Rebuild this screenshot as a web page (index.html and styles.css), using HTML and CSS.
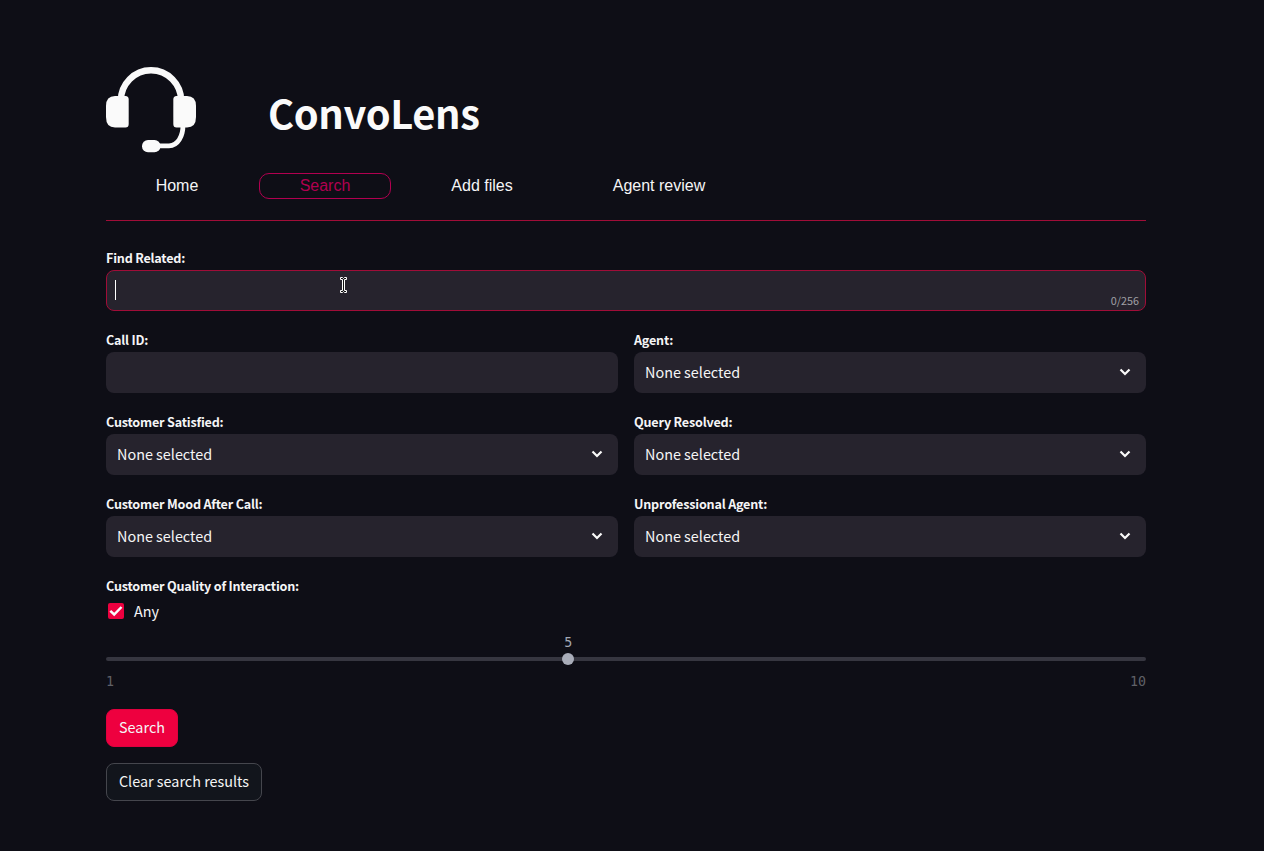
FILE: index.html
```html
<!DOCTYPE html>
<html lang="en">
<head>
<meta charset="utf-8">
<title>ConvoLens</title>
<link rel="stylesheet" href="styles.css">
</head>
<body>
<main class="page">
  <header class="brand">
    <svg class="logo" viewBox="0 0 90 86" width="90" height="86">
      <path d="M14.800 34A30.200 30.700 0 0 1 75.200 34" fill="none" stroke="#fafafa" stroke-width="6.400"/>
      <path d="M77 58C77 69 72 78.800 63 78.800H51" fill="none" stroke="#fafafa" stroke-width="4.800"/>
      <path d="M9 29H19.500Q22.700 29 22.700 32.500V57Q22.700 60.500 19.500 60.500H9Q0 60.500 0 50V39Q0 29 9 29Z" fill="#fafafa"/>
      <path d="M81 29H70.500Q67.300 29 67.300 32.500V57Q67.300 60.500 70.500 60.500H81Q90 60.500 90 50V39Q90 29 81 29Z" fill="#fafafa"/>
      <rect x="36" y="73" width="18.500" height="12.200" rx="6" fill="#fafafa"/>
    </svg>
    <h1 class="title">ConvoLens</h1>
  </header>
  <nav class="nav">
    <a class="nav-item nav-home">Home</a>
    <a class="nav-item nav-search active">Search</a>
    <a class="nav-item nav-add">Add files</a>
    <a class="nav-item nav-review">Agent review</a>
  </nav>
  <form class="form">
    <div class="field wide">
      <label class="label">Find Related:</label>
      <div class="control focused"><span class="caret"></span><span class="count">0/256</span>
        <svg class="pointer" viewBox="0 0 9 18" width="9" height="18"><path d="M1.500 1.500H3.500L4.500 2.500L5.500 1.500H7.500V3.500H5.500V14.500H7.500V16.500H5.500L4.500 15.500L3.500 16.500H1.500V14.500H3.500V3.500H1.500Z" fill="#111" stroke="#fff"/></svg>
      </div>
    </div>
    <div class="field"><label class="label">Call ID:</label><div class="control"></div></div>
    <div class="field"><label class="label">Agent:</label><div class="control">None selected<svg class="chevron" viewBox="0 0 12 8"><path d="M1.500 1.500L6 6L10.500 1.500"/></svg></div></div>
    <div class="field"><label class="label">Customer Satisfied:</label><div class="control">None selected<svg class="chevron" viewBox="0 0 12 8"><path d="M1.500 1.500L6 6L10.500 1.500"/></svg></div></div>
    <div class="field"><label class="label">Query Resolved:</label><div class="control">None selected<svg class="chevron" viewBox="0 0 12 8"><path d="M1.500 1.500L6 6L10.500 1.500"/></svg></div></div>
    <div class="field"><label class="label">Customer Mood After Call:</label><div class="control">None selected<svg class="chevron" viewBox="0 0 12 8"><path d="M1.500 1.500L6 6L10.500 1.500"/></svg></div></div>
    <div class="field"><label class="label">Unprofessional Agent:</label><div class="control">None selected<svg class="chevron" viewBox="0 0 12 8"><path d="M1.500 1.500L6 6L10.500 1.500"/></svg></div></div>
  </form>
  <section class="quality">
    <div class="label">Customer Quality of Interaction:</div>
    <div class="check"><span class="box"><svg viewBox="0 0 16 16" width="16" height="16"><path d="M2.300 7.800L6.200 11.500L13.500 4" fill="none" stroke="#fafafa" stroke-width="2.500"/></svg></span><span class="check-text">Any</span></div>
    <div class="slider">
      <div class="track"><div class="thumb" style="left:44.440%"><span class="value">5</span></div></div>
      <div class="range"><span>1</span><span>10</span></div>
    </div>
  </section>
  <div class="actions">
    <button class="button primary">Search</button>
    <button class="button secondary">Clear search results</button>
  </div>
</main>
</body>
</html>
```
FILE: styles.css
```css
* { box-sizing: border-box; }
body {
  margin: 0;
  background: #0e0e16;
  color: #f5f5f6;
  font-family: "Noto Sans CJK SC", "Open Sans", sans-serif;
  font-size: 14.400px;
}
.page { width: 1040px; margin-left: 106px; padding-top: 67px; }
.brand { display: flex; height: 106px; }
.logo { flex: none; }
.title {
  margin: 16px 0 0 72px;
  color: #fafafa;
  font-size: 39.800px;
  line-height: 58px;
  height: 58px;
  font-weight: 700;
  letter-spacing: -0.350px;
}
.nav {
  display: flex;
  height: 48px;
  border-bottom: 1px solid #a00d38;
  font: 16px/24px "Liberation Sans", Arial, sans-serif;
}
.nav-item {
  height: 26px;
  border: 1px solid transparent;
  border-radius: 10px;
  text-align: center;
}
.nav-home { width: 142px; }
.nav-search { width: 132px; margin-left: 11px; }
.nav-add { width: 140px; margin-left: 21px; }
.nav-review { width: 200px; margin-left: 7px; }
.active { color: #b20050; border-color: #b20050; }
.form {
  display: grid;
  grid-template-columns: 1fr 1fr;
  column-gap: 16px;
  row-gap: 16px;
  padding-top: 26px;
}
.field { height: 66px; }
.wide { grid-column: 1 / -1; }
.label {
  display: block;
  height: 23px;
  line-height: 22px;
  font-size: 12.600px;
  font-weight: 700;
  letter-spacing: -0.200px;
}
.control {
  position: relative;
  display: flex;
  align-items: center;
  justify-content: space-between;
  height: 41px;
  padding: 0 15px 2px 11px;
  border-radius: 8px;
  background: #26232d;
}
.focused { border: 1px solid #a00d38; padding: 0 6px 2px 8px; }
.caret { width: 1px; height: 20px; background: #fff; }
.count { align-self: flex-end; font-size: 10.800px; line-height: 16px; color: #a0a0a5; }
.pointer { position: absolute; left: 232px; top: 5px; }
.chevron { width: 12px; height: 8px; fill: none; stroke: #fafafa; stroke-width: 2.200; }
.quality { padding-top: 16px; }
.check { display: flex; align-items: center; height: 26px; padding-left: 2px; gap: 10px; }
.check-text { padding-bottom: 2px; }
.box { width: 16px; height: 16px; border-radius: 2px; background: #ed003f; display: flex; }
.slider { padding-top: 33px; font: 13.300px/18px "DejaVu Sans Mono", monospace; color: #606168; }
.track { position: relative; height: 4px; border-radius: 2px; background: #363640; }
.thumb {
  position: absolute;
  top: -4px;
  width: 12px;
  height: 12px;
  margin-left: -6px;
  border-radius: 50%;
  background: #a9adb9;
}
.value { position: absolute; bottom: 13px; left: 2px; color: #a3a8b4; }
.range { display: flex; justify-content: space-between; padding-top: 12px; }
.actions { display: flex; flex-direction: column; align-items: flex-start; gap: 16px; padding-top: 18px; }
.button {
  height: 38px;
  padding: 0 0 3px;
  border: 1px solid #45464d;
  border-radius: 8px;
  background: #12151c;
  color: #f5f5f6;
  font-family: inherit;
  font-size: 14.400px;
}
.primary { width: 72px; border-color: #e0003e; background: #ee003f; }
.secondary { width: 156px; }
```
